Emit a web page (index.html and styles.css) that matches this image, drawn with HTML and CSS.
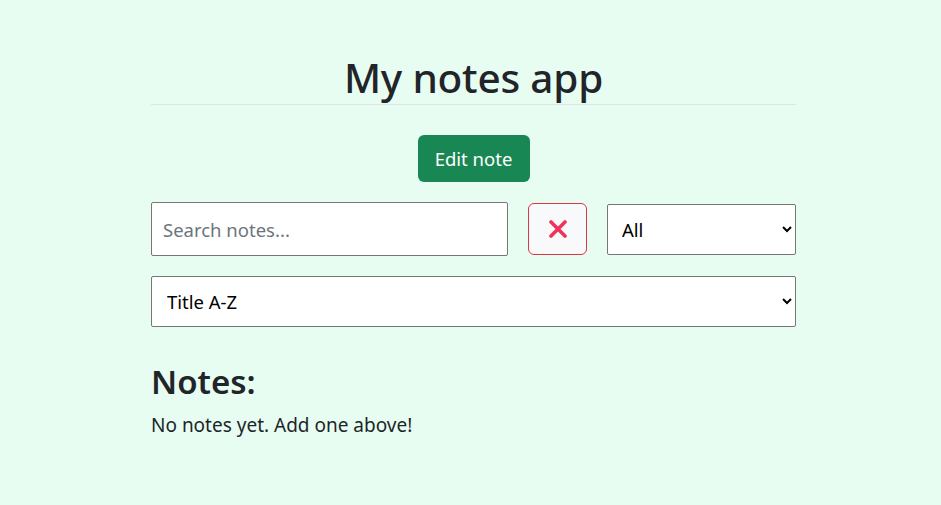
FILE: index.html
```html
<!DOCTYPE html>
<html lang="en">
<head>
<meta charset="utf-8">
<title>My notes app</title>
<link rel="stylesheet" href="styles.css">
</head>
<body>
<main class="app">
  <h1 class="title">My notes app</h1>
  <div class="actions">
    <button class="btn-edit" type="button">Edit note</button>
  </div>
  <div class="filters">
    <input class="search" type="text" placeholder="Search notes...">
    <button class="btn-clear" type="button" aria-label="Clear">
      <svg width="22" height="18" viewBox="0 0 22 18"><path d="M4 2 L18 16 M18 2 L4 16" stroke="#f0335c" stroke-width="3.6" stroke-linecap="round" fill="none"/></svg>
    </button>
    <select class="select category"><option>All</option></select>
  </div>
  <select class="select sort"><option>Title A-Z</option></select>
  <h2 class="notes-title">Notes:</h2>
  <p class="empty">No notes yet. Add one above!</p>
</main>
</body>
</html>
```
FILE: styles.css
```css
* { box-sizing: border-box; }
html, body { margin: 0; padding: 0; }
body {
  background: #e8fdf2;
  font-family: "Noto Sans", "Open Sans", sans-serif;
  color: #212529;
}
.app {
  width: 645px;
  margin: 0 0 0 151px;
  padding-top: 52px;
}
.title {
  margin: 0;
  font-size: 40.5px;
  font-weight: 500;
  line-height: 52px;
  text-align: center;
  border-bottom: 1px solid #dfe3e6;
  letter-spacing: -0.2px;
}
.actions {
  display: flex;
  justify-content: center;
  padding-top: 30px;
}
.btn-edit {
  width: 112px;
  height: 47px;
  background: #198754;
  color: #fff;
  border: none;
  border-radius: 6px;
  font-family: inherit;
  font-size: 18.5px;
}
.filters {
  display: flex;
  align-items: center;
  gap: 20px;
  margin-top: 20px;
}
.search {
  width: 357px;
  height: 54px;
  border: 1px solid #767676;
  border-radius: 2px;
  padding: 0 11px;
  font-family: inherit;
  font-size: 18.5px;
  background: #fff;
}
.search::placeholder { color: #6c757d; }
.btn-clear {
  width: 59px;
  height: 52px;
  border: 1px solid #dc3545;
  border-radius: 6px;
  background: #f8f9fa;
  display: flex;
  align-items: center;
  justify-content: center;
  padding: 0;
}
.select {
  height: 51px;
  border: 1px solid #767676;
  border-radius: 2px;
  background: #fff;
  font-family: inherit;
  font-size: 18.5px;
  color: #000;
  padding: 0 10px;
}
.category { width: 189px; }
.sort {
  display: block;
  width: 645px;
  margin-top: 20px;
  padding-left: 11px;
}
.notes-title {
  margin: 33px 0 0;
  font-size: 33px;
  font-weight: 600;
  line-height: 44px;
}
.empty {
  margin: 7px 0 0;
  font-size: 19px;
  line-height: 28px;
}
```
